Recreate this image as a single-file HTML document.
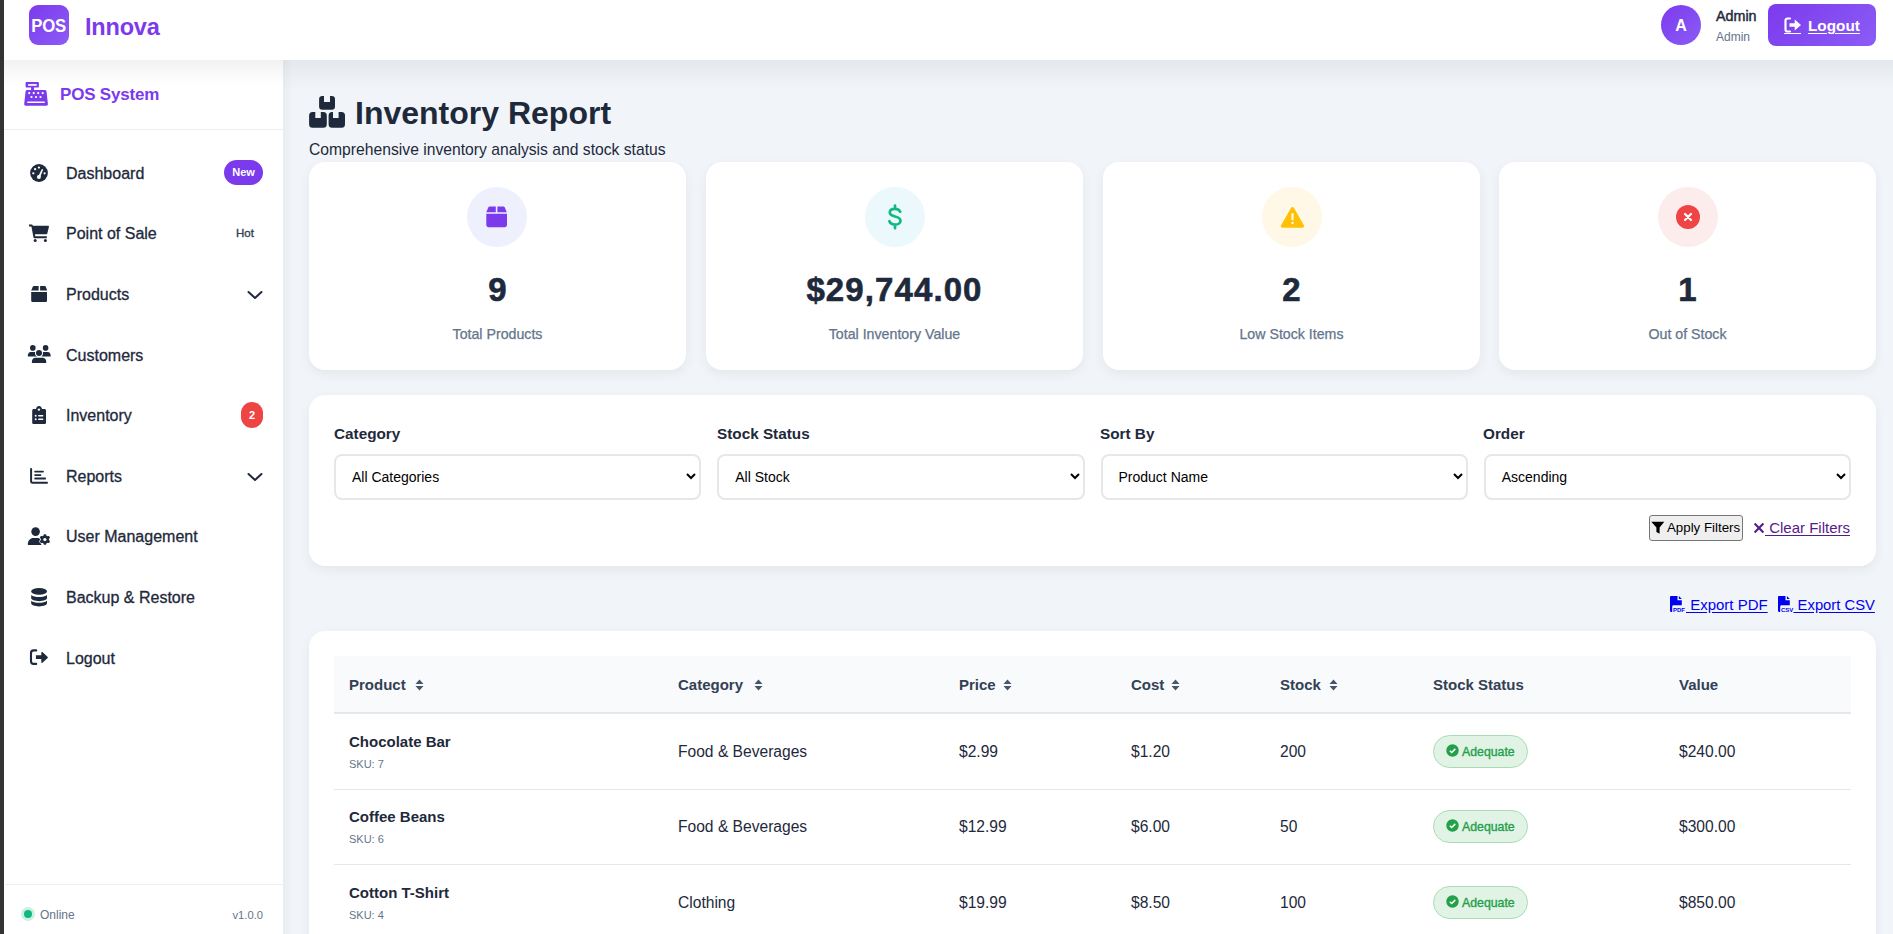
<!DOCTYPE html>
<html><head><meta charset="utf-8">
<style>
*{box-sizing:border-box;margin:0;padding:0}
html,body{width:1893px;height:934px;overflow:hidden}
body{font-family:"Liberation Sans",sans-serif;background:#f1f5f9;position:relative;color:#1e293b}
.abs{position:absolute}
.edge{position:absolute;left:0;top:0;width:4px;height:934px;background:#333}
.header{position:absolute;left:4px;top:0;width:1889px;height:60px;background:#fff;z-index:3}
.logo{position:absolute;left:25px;top:5px;width:40px;height:40px;border-radius:9px;background:linear-gradient(135deg,#7c3aed,#8b5cf6);color:#fff;font-weight:bold;font-size:16.5px;line-height:40px;text-align:center;letter-spacing:-0.3px}
.brand{position:absolute;left:81px;top:0;height:54px;line-height:54px;font-size:23.5px;font-weight:bold;color:#7c3aed;letter-spacing:-0.2px}
.avatar{position:absolute;left:1657px;top:5px;width:40px;height:40px;border-radius:50%;background:linear-gradient(135deg,#7c3aed,#8b5cf6);color:#fff;font-weight:bold;font-size:16px;line-height:41px;text-align:center}
.uname{position:absolute;left:1712px;top:6px;font-size:14.3px;line-height:20px;color:#1e293b;-webkit-text-stroke:0.45px #1e293b}
.urole{position:absolute;left:1712px;top:28px;font-size:12px;line-height:18px;color:#64748b}
.logout{position:absolute;left:1764px;top:4px;width:108px;height:42px;border-radius:8px;background:linear-gradient(135deg,#7c3aed,#8b5cf6);color:#fff}
.logout span{position:absolute;left:40px;top:0;line-height:43px;font-size:15.3px;font-weight:bold;text-decoration:underline;text-underline-offset:2px}
.sidebar{position:absolute;left:4px;top:60px;width:279px;height:874px;background:#fff;z-index:2}
.sb-top{position:absolute;left:0;top:0;width:279px;height:70px;border-bottom:1px solid #eceef2;background:linear-gradient(#f2f2f3,#fff 26px)}
.sb-title{position:absolute;left:56px;top:20px;line-height:30px;font-size:17px;font-weight:bold;color:#7c3aed;letter-spacing:-0.2px}
.nav{position:absolute;left:0;width:279px;height:60px}
.nav svg{position:absolute;left:20px;top:15px}
.nav .t{position:absolute;left:62px;top:1px;line-height:60px;font-size:16px;color:#1e293b;-webkit-text-stroke:0.3px #1e293b}
.badge-new{position:absolute;left:220px;top:17px;width:39px;height:25px;border-radius:13px;background:#7c3aed;color:#fff;font-size:11px;font-weight:bold;text-align:center;line-height:25px}
.hot{position:absolute;left:232px;top:0;line-height:60px;font-size:11.5px;color:#334155;-webkit-text-stroke:0.35px #334155}
.badge-red{position:absolute;left:237px;top:17px;width:22px;height:26px;border-radius:11px;background:#ef4444;color:#fff;font-size:11px;font-weight:bold;text-align:center;line-height:26px}
.nav .chev{position:absolute;left:243px;top:26px}
.sb-foot{position:absolute;left:1px;top:824px;width:278px;height:50px;border-top:1px solid #eceef2}
.main-shadow{position:absolute;left:283px;top:60px;width:1610px;height:30px;background:linear-gradient(rgba(15,23,42,.055),rgba(15,23,42,0))}
.main-lshadow{position:absolute;left:283px;top:60px;width:10px;height:874px;background:linear-gradient(90deg,rgba(15,23,42,.04),rgba(15,23,42,0))}
.card{position:absolute;background:#fff;border-radius:16px;box-shadow:0 4px 12px rgba(15,23,42,.06)}
.stat .ic{position:absolute;left:158.5px;top:25px;width:60px;height:60px;border-radius:50%}
.stat .ic svg{position:absolute}
.stat .num{position:absolute;left:0;width:100%;top:110px;text-align:center;font-size:33px;font-weight:bold;line-height:36px;color:#1e293b;-webkit-text-stroke:0.6px #1e293b}
.stat .lbl{position:absolute;left:0;width:100%;top:162px;text-align:center;font-size:14.2px;line-height:20px;color:#64748b;-webkit-text-stroke:0.25px #64748b}
.flabel{position:absolute;top:422px;font-size:15.3px;font-weight:bold;line-height:24px;color:#1e293b}
.sel{position:absolute;top:454px;width:367.25px;height:46px;border:2px solid #e5e7eb;border-radius:8px;background:#fff}
.sel span{position:absolute;left:16px;top:0;line-height:42px;font-size:14px;color:#000}
.sel svg{position:absolute;right:8px;top:16px}
.btn{position:absolute;left:1649px;top:515px;width:94px;height:26px;border:1px solid #767676;border-radius:3px;background:#efefef;font-size:13.3px;line-height:23px;color:#000}
.lnk{position:absolute;text-decoration:underline;text-underline-offset:2px}
.th{position:absolute;top:657px;font-size:15px;font-weight:bold;line-height:56px;color:#334155}
.sort{position:absolute}
.td{position:absolute;margin-top:1px;font-size:15.6px;line-height:20px;color:#1e293b}
.pname{position:absolute;left:349px;font-size:15px;font-weight:bold;line-height:20px;color:#1e293b}
.sku{position:absolute;left:349px;margin-top:1px;font-size:11px;line-height:14px;color:#64748b}
.ok{position:absolute;left:1433px;width:95px;height:33px;border-radius:17px;background:#e1f3e5;border:1px solid #a9dcb4;color:#22a04a;font-size:12.3px;line-height:31px;-webkit-text-stroke:0.35px #22a04a}
.ok svg{position:absolute;left:12px;top:8px}
.ok span{position:absolute;left:28px;top:1px}
</style></head><body>
<div class="edge"></div>
<div class="header">
  <div class="logo"><span style="display:inline-block;transform:scaleX(.93);font-size:18px;letter-spacing:-0.3px;position:relative;top:1px">POS</span></div>
  <div class="brand">Innova</div>
  <div class="avatar">A</div>
  <div class="uname">Admin</div>
  <div class="urole">Admin</div>
  <div class="logout">
    <svg class="abs" style="left:16px;top:13px" width="18" height="16" viewBox="0 0 18 16"><path d="M6 1.5H3.5A2 2 0 0 0 1.5 3.5v9a2 2 0 0 0 2 2H6" fill="none" stroke="#fff" stroke-width="2.2" stroke-linecap="round"/><path d="M5.5 6.2h5.2V2.6L17 8l-6.3 5.4V9.8H5.5z" fill="#fff"/></svg>
    <div class="abs" style="left:16px;top:28.5px;width:17px;height:1.2px;background:#fff"></div><span>Logout</span>
  </div>
</div>
<div class="main-shadow"></div><div class="main-lshadow"></div>
<div class="sidebar">
  <div class="sb-top">
    <svg class="abs" style="left:20px;top:22px" width="26" height="26" viewBox="0 0 26 26"><path d="M2.6 0h11.3c.6 0 1 .4 1 1v3.6c0 .6-.4 1-1 1H10v2.3h10.9c.8 0 1.5.6 1.6 1.4l1.4 12.7c.1 1-.6 1.7-1.6 1.7H1.8c-1 0-1.7-.8-1.6-1.7L1.6 9.3c.1-.8.8-1.4 1.6-1.4h3.9V5.6H2.6c-.6 0-1-.4-1-1V1c0-.6.4-1 1-1z" fill="#7c3aed"/><rect x="4.1" y="2.1" width="8.6" height="1.7" fill="#fff"/><g fill="#fff"><circle cx="5.2" cy="11.1" r="1.1"/><circle cx="9.7" cy="11.1" r="1.1"/><circle cx="14.2" cy="11.1" r="1.1"/><circle cx="18.7" cy="11.1" r="1.1"/><circle cx="7.5" cy="15" r="1.1"/><circle cx="12" cy="15" r="1.1"/><circle cx="16.5" cy="15" r="1.1"/><rect x="3.1" y="19.4" width="17.9" height="1.6" rx=".8"/></g></svg>
    <div class="sb-title">POS System</div>
  </div>
  <!-- nav items: centers y 173,233,294,355,415,476,536,597,658 (abs) -> sidebar-relative minus 60 -->
  <div class="nav" style="top:83px">
    <svg width="30" height="30" viewBox="0 0 30 30"><circle cx="15" cy="15" r="8.9" fill="#1e293b"/><g fill="#fff"><circle cx="11.1" cy="11.2" r="1.15"/><circle cx="14.9" cy="9.6" r="1.15"/><circle cx="9.3" cy="15.3" r="1.15"/><circle cx="20.6" cy="15.3" r="1.15"/><circle cx="14.9" cy="19.1" r="2"/><path d="M17.9 11.1l1.3.5-3.1 7.6-2-.8z"/></g></svg>
    <div class="t">Dashboard</div><div class="badge-new">New</div>
  </div>
  <div class="nav" style="top:143px">
    <svg width="30" height="30" viewBox="0 0 30 30"><path d="M5 6.6h2.8c.4 0 .8.3.9.7l.1.4h15.2c.6 0 1.1.6.9 1.2l-1.6 6.6c-.1.5-.5.8-1 .8H10.9l.4 2h11.5v2H10.5c-.5 0-.9-.3-1-.8L7.4 8.6H5z" fill="#1e293b"/><circle cx="11.2" cy="22.5" r="1.5" fill="#1e293b"/><circle cx="21.4" cy="22.5" r="1.5" fill="#1e293b"/></svg>
    <div class="t">Point of Sale</div><div class="hot">Hot</div>
  </div>
  <div class="nav" style="top:204px">
    <svg width="30" height="30" viewBox="0 0 30 30"><g fill="#1e293b"><path d="M7.2 11.6L8.9 7.6c.2-.4.5-.6.9-.6h4.8v4.6z"/><path d="M16.1 7h4.7c.4 0 .7.2.9.6l1.5 4H16.1z"/><path d="M7.2 13h15.8v8.4c0 .9-.7 1.6-1.6 1.6H8.8c-.9 0-1.6-.7-1.6-1.6z"/></g></svg>
    <div class="t">Products</div>
    <svg class="chev" width="16" height="10" viewBox="0 0 16 10"><path d="M1.5 2l6.5 6 6.5-6" fill="none" stroke="#1e293b" stroke-width="2" stroke-linecap="round" stroke-linejoin="round"/></svg>
  </div>
  <div class="nav" style="top:265px">
    <svg width="30" height="30" viewBox="0 0 30 30"><g fill="#1e293b"><circle cx="8.8" cy="7.9" r="2.8"/><circle cx="21.6" cy="7.9" r="2.8"/><path d="M6.6 12h4.6c1 0 1.8.8 1.8 1.8v2.8H3.9v-1.4C3.9 13.4 5.1 12 6.6 12z"/><path d="M19.3 12h4.6c1.5 0 2.7 1.4 2.7 3.2v1.4H17.5v-2.8c0-1 .8-1.8 1.8-1.8z"/><circle cx="15" cy="12.9" r="3" stroke="#fff" stroke-width="2" paint-order="stroke"/><path d="M11.6 17.7h6.9c2.1 0 3.7 1.6 3.7 3.7v1.6H7.9v-1.6c0-2.1 1.6-3.7 3.7-3.7z" stroke="#fff" stroke-width="1.6" paint-order="stroke"/></g></svg>
    <div class="t">Customers</div>
  </div>
  <div class="nav" style="top:325px">
    <svg width="30" height="30" viewBox="0 0 30 30"><path d="M9.8 8.9h2.2c.4-1.7 1.5-2.9 3-2.9s2.6 1.2 3 2.9h2.4c.9 0 1.6.7 1.6 1.6v12c0 .9-.7 1.6-1.6 1.6H9.8c-.9 0-1.6-.7-1.6-1.6v-12c0-.9.7-1.6 1.6-1.6z" fill="#1e293b"/><g fill="#fff"><circle cx="14.9" cy="9.6" r="1.2"/><circle cx="11.7" cy="15.7" r="1"/><circle cx="11.7" cy="19.3" r="1"/><rect x="14.1" y="15" width="5.3" height="1.4" rx=".7"/><rect x="14.1" y="18.6" width="5.3" height="1.4" rx=".7"/></g></svg>
    <div class="t">Inventory</div><div class="badge-red">2</div>
  </div>
  <div class="nav" style="top:386px">
    <svg width="30" height="30" viewBox="0 0 30 30"><g stroke="#1e293b" stroke-linecap="round" fill="none"><path d="M7.1 8v12.4c0 .8.6 1.4 1.4 1.4H23" stroke-width="2"/><path d="M11.1 10.6h7.9M11.1 14.1h5.4M11.1 17.5h10.1" stroke-width="1.8"/></g></svg>
    <div class="t">Reports</div>
    <svg class="chev" width="16" height="10" viewBox="0 0 16 10"><path d="M1.5 2l6.5 6 6.5-6" fill="none" stroke="#1e293b" stroke-width="2" stroke-linecap="round" stroke-linejoin="round"/></svg>
  </div>
  <div class="nav" style="top:446px">
    <svg width="30" height="30" viewBox="0 0 30 30"><g fill="#1e293b"><circle cx="11.6" cy="10.6" r="4.3"/><path d="M9.4 17h4.6c1.2 0 2.3.3 3.3.9V24H3.9v-1.5C3.9 19.5 6.4 17 9.4 17z"/></g><g transform="translate(20.9 18.5)" fill="#1e293b" stroke="#fff" stroke-width="1.4"><rect x="-1.35" y="-5.3" width="2.7" height="10.6" rx="0.8" transform="rotate(0)"/><rect x="-1.35" y="-5.3" width="2.7" height="10.6" rx="0.8" transform="rotate(60)"/><rect x="-1.35" y="-5.3" width="2.7" height="10.6" rx="0.8" transform="rotate(120)"/><circle r="3.9"/></g><g transform="translate(20.9 18.5)" fill="#1e293b"><rect x="-1.35" y="-5.3" width="2.7" height="10.6" rx="0.8" transform="rotate(0)"/><rect x="-1.35" y="-5.3" width="2.7" height="10.6" rx="0.8" transform="rotate(60)"/><rect x="-1.35" y="-5.3" width="2.7" height="10.6" rx="0.8" transform="rotate(120)"/><circle r="3.9"/></g><circle cx="20.9" cy="18.5" r="1.6" fill="#fff"/></svg>
    <div class="t">User Management</div>
  </div>
  <div class="nav" style="top:507px">
    <svg width="30" height="30" viewBox="0 0 30 30"><g fill="#1e293b"><ellipse cx="15.1" cy="9.4" rx="7.9" ry="3.3"/><path d="M7.2 12.9c1.6 1.4 4.6 2.1 7.9 2.1s6.3-.7 7.9-2.1v3.2c0 1.8-3.5 3.1-7.9 3.1s-7.9-1.3-7.9-3.1z"/><path d="M7.2 18.7c1.6 1.4 4.6 2.1 7.9 2.1s6.3-.7 7.9-2.1v2.6c0 1.8-3.5 3.1-7.9 3.1s-7.9-1.3-7.9-3.1z"/></g></svg>
    <div class="t">Backup &amp; Restore</div>
  </div>
  <div class="nav" style="top:568px">
    <svg width="30" height="30" viewBox="0 0 30 30"><path d="M12.2 7.4H9.6c-1.5 0-2.6 1.2-2.6 2.6v8.3c0 1.5 1.2 2.6 2.6 2.6h2.6" fill="none" stroke="#1e293b" stroke-width="2.1" stroke-linecap="round"/><path d="M11.9 12.2h5.4V9.6c0-.6.7-.9 1.1-.5l5.3 4.8c.3.3.3.7 0 1l-5.3 4.8c-.4.4-1.1.1-1.1-.5V16.1h-5.4z" fill="#1e293b"/></svg>
    <div class="t">Logout</div>
  </div>
  <div class="sb-foot">
    <div class="abs" style="left:16px;top:22px;width:14px;height:14px;border-radius:50%;background:#cdf0e1"></div>
    <div class="abs" style="left:19px;top:25px;width:8px;height:8px;border-radius:50%;background:#10b981"></div>
    <div class="abs" style="left:35px;top:20px;font-size:12px;line-height:20px;color:#64748b">Online</div>
    <div class="abs" style="left:227.5px;top:20px;font-size:11.2px;line-height:20px;color:#64748b">v1.0.0</div>
  </div>
</div>

<!-- Title -->
<svg class="abs" style="left:309px;top:96px" width="37" height="33" viewBox="0 0 37 33"><path fill="#1e293b" d="M13.399999999999999 0H15V6H21V0H22.7A3.3 3.3 0 0 1 26 3.3V10.5A3.3 3.3 0 0 1 22.7 13.8H13.399999999999999A3.3 3.3 0 0 1 10.1 10.5V3.3A3.3 3.3 0 0 1 13.399999999999999 0ZM3.6 15.9H6.3V21.9H11.8V15.9H14.3A3.5 3.5 0 0 1 17.8 19.4V28.2A3.5 3.5 0 0 1 14.3 31.7H3.6A3.5 3.5 0 0 1 0.1 28.2V19.4A3.5 3.5 0 0 1 3.6 15.9ZM23.1 15.9H24V21.9H29.6V15.9H32.5A3.5 3.5 0 0 1 36 19.4V28.2A3.5 3.5 0 0 1 32.5 31.7H23.1A3.5 3.5 0 0 1 19.6 28.2V19.4A3.5 3.5 0 0 1 23.1 15.9Z"/></svg>
<div class="abs" style="left:355px;top:93px;font-size:32px;font-weight:bold;line-height:40px;color:#1e293b">Inventory Report</div>
<div class="abs" style="left:309px;top:140px;font-size:15.7px;line-height:20px;color:#1e293b">Comprehensive inventory analysis and stock status</div>

<!-- Stat cards -->
<div class="card stat" style="left:309px;top:162px;width:377px;height:208px">
  <div class="ic" style="left:158px;background:#eef0fd"><svg style="left:19px;top:19px" width="22" height="22" viewBox="0 0 22 22"><g fill="#7c3aed"><path d="M0.3 6.2L2.4 1.2c.2-.5.7-.8 1.2-.8h6.2v5.8z"/><path d="M11.4 0.4h6.1c.5 0 1 .3 1.2.8l2.1 5H11.4z"/><path d="M0.3 7.8h20.7v11.3c0 1.2-1 2.2-2.2 2.2H2.5c-1.2 0-2.2-1-2.2-2.2z"/></g></svg></div>
  <div class="num">9</div><div class="lbl">Total Products</div>
</div>
<div class="card stat" style="left:706px;top:162px;width:377px;height:208px">
  <div class="ic" style="background:#ebf8fc"><svg style="left:22px;top:17px" width="16" height="26" viewBox="0 0 16 26"><path d="M8 1.5v3M8 21v3.2M13.2 7.8c-.6-1.6-2.4-3-5.2-3-3.2 0-5.2 1.6-5.2 3.7 0 2.5 2.5 3.3 5.2 4 2.8.7 5.5 1.5 5.5 4.2 0 2.2-2.2 3.9-5.5 3.9-3 0-5-1.4-5.6-3.4" fill="none" stroke="#10b981" stroke-width="2.7" stroke-linecap="round"/></svg></div>
  <div class="num" style="letter-spacing:1.1px">$29,744.00</div><div class="lbl">Total Inventory Value</div>
</div>
<div class="card stat" style="left:1103px;top:162px;width:377px;height:208px">
  <div class="ic" style="background:#fff8e6"><svg style="left:18px;top:19px" width="25" height="23" viewBox="0 0 25 23"><path d="M12.5 1c.6 0 1.1.3 1.4.8l10 17.4c.6 1.1-.2 2.5-1.4 2.5H2.5c-1.3 0-2.1-1.4-1.4-2.5l10-17.4c.3-.5.8-.8 1.4-.8z" fill="#ffc107"/><rect x="11.5" y="7.2" width="2" height="7" rx=".5" fill="#fff"/><rect x="11.5" y="16" width="2" height="2" rx=".5" fill="#fff"/></svg></div>
  <div class="num">2</div><div class="lbl">Low Stock Items</div>
</div>
<div class="card stat" style="left:1499px;top:162px;width:377px;height:208px">
  <div class="ic" style="background:#fdecec"><svg style="left:18px;top:18px" width="24" height="24" viewBox="0 0 24 24"><circle cx="12" cy="12" r="12" fill="#ef4444"/><path d="M9 9l6 6M15 9l-6 6" stroke="#fff" stroke-width="2.2" stroke-linecap="round"/></svg></div>
  <div class="num">1</div><div class="lbl">Out of Stock</div>
</div>

<!-- Filters -->
<div class="card" style="left:309px;top:395px;width:1567px;height:171px"></div>
<div class="flabel" style="left:334px">Category</div>
<div class="flabel" style="left:717px">Stock Status</div>
<div class="flabel" style="left:1100px">Sort By</div>
<div class="flabel" style="left:1483px">Order</div>
<div class="sel" style="left:334px"><span>All Categories</span><svg width="12" height="10" viewBox="0 0 12 10" style="right:2px;top:15px"><path d="M2 3l4 4 4-4" fill="none" stroke="#000" stroke-width="2"/></svg></div>
<div class="sel" style="left:717.25px"><span>All Stock</span><svg width="12" height="10" viewBox="0 0 12 10" style="right:2px;top:15px"><path d="M2 3l4 4 4-4" fill="none" stroke="#000" stroke-width="2"/></svg></div>
<div class="sel" style="left:1100.5px"><span>Product Name</span><svg width="12" height="10" viewBox="0 0 12 10" style="right:2px;top:15px"><path d="M2 3l4 4 4-4" fill="none" stroke="#000" stroke-width="2"/></svg></div>
<div class="sel" style="left:1483.75px"><span>Ascending</span><svg width="12" height="10" viewBox="0 0 12 10" style="right:2px;top:15px"><path d="M2 3l4 4 4-4" fill="none" stroke="#000" stroke-width="2"/></svg></div>
<div class="btn"><svg class="abs" style="left:1px;top:5px" width="14" height="14" viewBox="0 0 14 14"><path d="M0.3 0.8h13L8.6 6.6v6.2L5.4 11V6.6z" fill="#000"/></svg><span class="abs" style="left:17px;top:0">Apply Filters</span></div>
<svg class="abs" style="left:1753px;top:522px" width="12" height="12" viewBox="0 0 12 12"><path d="M1.6 1.6l8.8 8.8M10.4 1.6l-8.8 8.8" stroke="#551a8b" stroke-width="2.1"/></svg>
<div class="lnk" style="left:1765px;top:518px;font-size:15px;line-height:20px;color:#551a8b">&nbsp;Clear Filters</div>

<!-- Export -->
<svg class="abs" style="left:1670px;top:596px" width="17" height="16" viewBox="0 0 17 16"><path d="M1.2 0h6.3v4.3h4.3v5H3.6c-.8 0-1.4.6-1.4 1.4v5.3H1.2C.5 16 0 15.5 0 14.8V1.2C0 .5.5 0 1.2 0zM8.9 0l2.9 2.9H8.9z" fill="#0000ee"/><text x="3" y="15.6" font-family="Liberation Sans" font-weight="bold" font-size="6" fill="#0000ee">PDF</text></svg>
<div class="lnk" style="left:1686px;top:595px;font-size:15px;line-height:20px;color:#0000ee">&nbsp;Export PDF</div>
<svg class="abs" style="left:1778px;top:596px" width="17" height="16" viewBox="0 0 17 16"><path d="M1.2 0h6.3v4.3h4.3v5H3.6c-.8 0-1.4.6-1.4 1.4v5.3H1.2C.5 16 0 15.5 0 14.8V1.2C0 .5.5 0 1.2 0zM8.9 0l2.9 2.9H8.9z" fill="#0000ee"/><text x="3" y="15.6" font-family="Liberation Sans" font-weight="bold" font-size="6" fill="#0000ee">CSV</text></svg>
<div class="lnk" style="left:1793.5px;top:595px;font-size:14.8px;line-height:20px;color:#0000ee">&nbsp;Export CSV</div>

<!-- Table -->
<div class="card" style="left:309px;top:631px;width:1567px;height:340px"></div>
<div class="abs" style="left:334px;top:656px;width:1517px;height:58px;background:#f8fafc;border-bottom:2px solid #e5e7eb"></div>
<div class="th" style="left:349px">Product</div>
<div class="th" style="left:678px">Category</div>
<div class="th" style="left:959px">Price</div>
<div class="th" style="left:1131px">Cost</div>
<div class="th" style="left:1280px">Stock</div>
<div class="th" style="left:1433px">Stock Status</div>
<div class="th" style="left:1679px">Value</div>
<svg class="sort" style="left:415px;top:679px" width="9" height="12" viewBox="0 0 9 12"><path d="M4.5 0.5L8.5 5H0.5zM4.5 11.5L0.5 7h8z" fill="#475569"/></svg>
<svg class="sort" style="left:754px;top:679px" width="9" height="12" viewBox="0 0 9 12"><path d="M4.5 0.5L8.5 5H0.5zM4.5 11.5L0.5 7h8z" fill="#475569"/></svg>
<svg class="sort" style="left:1003px;top:679px" width="9" height="12" viewBox="0 0 9 12"><path d="M4.5 0.5L8.5 5H0.5zM4.5 11.5L0.5 7h8z" fill="#475569"/></svg>
<svg class="sort" style="left:1171px;top:679px" width="9" height="12" viewBox="0 0 9 12"><path d="M4.5 0.5L8.5 5H0.5zM4.5 11.5L0.5 7h8z" fill="#475569"/></svg>
<svg class="sort" style="left:1329px;top:679px" width="9" height="12" viewBox="0 0 9 12"><path d="M4.5 0.5L8.5 5H0.5zM4.5 11.5L0.5 7h8z" fill="#475569"/></svg>
<div class="abs" style="left:334px;top:789.0px;width:1517px;height:1px;background:#e5e7eb"></div>
<div class="pname" style="top:732.0px">Chocolate Bar</div>
<div class="sku" style="top:756.0px">SKU: 7</div>
<div class="td" style="left:678px;top:741.0px">Food &amp; Beverages</div>
<div class="td" style="left:959px;top:741.0px">$2.99</div>
<div class="td" style="left:1131px;top:741.0px">$1.20</div>
<div class="td" style="left:1280px;top:741.0px">200</div>
<div class="ok" style="top:735.0px"><svg width="13" height="13" viewBox="0 0 13 13"><circle cx="6.5" cy="6.5" r="6.2" fill="#22a04a"/><path d="M3.8 6.7l1.9 1.8 3.6-3.6" fill="none" stroke="#fff" stroke-width="1.5"/></svg><span>Adequate</span></div>
<div class="td" style="left:1679px;top:741.0px">$240.00</div>
<div class="abs" style="left:334px;top:864.4px;width:1517px;height:1px;background:#e5e7eb"></div>
<div class="pname" style="top:807.4px">Coffee Beans</div>
<div class="sku" style="top:831.4px">SKU: 6</div>
<div class="td" style="left:678px;top:816.4px">Food &amp; Beverages</div>
<div class="td" style="left:959px;top:816.4px">$12.99</div>
<div class="td" style="left:1131px;top:816.4px">$6.00</div>
<div class="td" style="left:1280px;top:816.4px">50</div>
<div class="ok" style="top:810.4px"><svg width="13" height="13" viewBox="0 0 13 13"><circle cx="6.5" cy="6.5" r="6.2" fill="#22a04a"/><path d="M3.8 6.7l1.9 1.8 3.6-3.6" fill="none" stroke="#fff" stroke-width="1.5"/></svg><span>Adequate</span></div>
<div class="td" style="left:1679px;top:816.4px">$300.00</div>
<div class="abs" style="left:334px;top:939.8px;width:1517px;height:1px;background:#e5e7eb"></div>
<div class="pname" style="top:882.8px">Cotton T-Shirt</div>
<div class="sku" style="top:906.8px">SKU: 4</div>
<div class="td" style="left:678px;top:891.8px">Clothing</div>
<div class="td" style="left:959px;top:891.8px">$19.99</div>
<div class="td" style="left:1131px;top:891.8px">$8.50</div>
<div class="td" style="left:1280px;top:891.8px">100</div>
<div class="ok" style="top:885.8px"><svg width="13" height="13" viewBox="0 0 13 13"><circle cx="6.5" cy="6.5" r="6.2" fill="#22a04a"/><path d="M3.8 6.7l1.9 1.8 3.6-3.6" fill="none" stroke="#fff" stroke-width="1.5"/></svg><span>Adequate</span></div>
<div class="td" style="left:1679px;top:891.8px">$850.00</div>
</body></html>
